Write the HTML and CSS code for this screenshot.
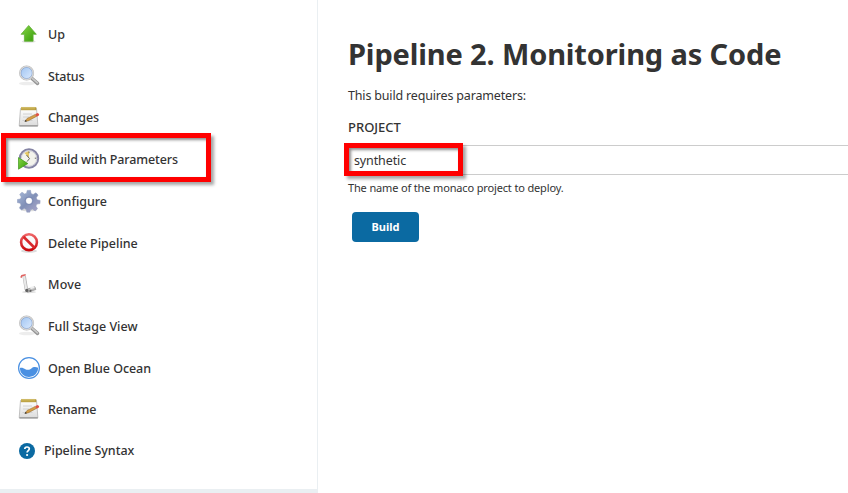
FILE: index.html
```html
<!DOCTYPE html>
<html lang="en">
<head>
<meta charset="utf-8">
<title>Pipeline 2. Monitoring as Code</title>
<link rel="stylesheet" href="styles.css">
</head>
<body>
<svg class="defs" aria-hidden="true">
  <defs>
    <linearGradient id="green" x1="0" y1="0" x2="1" y2="1"><stop offset="0" stop-color="#87d646"/><stop offset="1" stop-color="#349b08"/></linearGradient>
    <linearGradient id="glass" x1="0" y1="0" x2="1" y2="1"><stop offset="0" stop-color="#9cc2f0"/><stop offset="1" stop-color="#e0edff"/></linearGradient>
    <linearGradient id="paper" x1="0" y1="0" x2="0" y2="1"><stop offset="0" stop-color="#fff"/><stop offset="1" stop-color="#dcdcdc"/></linearGradient>
    <linearGradient id="steel" x1="0" y1="0" x2="1" y2="1"><stop offset="0" stop-color="#a9bbdb"/><stop offset=".5" stop-color="#8190b7"/><stop offset="1" stop-color="#b0a9cb"/></linearGradient>
    <linearGradient id="red" x1="0" y1="0" x2="0" y2="1"><stop offset="0" stop-color="#ef6466"/><stop offset="1" stop-color="#c9090d"/></linearGradient>
    <symbol id="search" viewBox="0 0 24 24">
      <ellipse cx="10" cy="19.5" rx="8" ry="1.8" fill="#ededed"/>
      <path d="M15 14.5 20.5 19.3" stroke="#959595" stroke-width="3.6" stroke-linecap="round"/>
      <path d="M15.3 14.3 20.5 18.8" stroke="#c8c8c8" stroke-width="1.6" stroke-linecap="round"/>
      <circle cx="9.6" cy="9" r="6.6" fill="url(#glass)" stroke="#b9b9b9" stroke-width="1.9"/>
      <circle cx="9.6" cy="9" r="5.6" fill="none" stroke="#7f9fd0" stroke-width=".6"/>
      <circle cx="9.6" cy="9" r="6.5" fill="none" stroke="#e2e2e2" stroke-width=".9"/>
    </symbol>
    <symbol id="notepad" viewBox="0 0 24 24">
      <path d="M3.5 3.5h16l1.4 17.2H2.2z" fill="url(#paper)" stroke="#b4b4b4" stroke-width=".8"/>
      <path d="M2.4 20.9h18.4" stroke="#999" stroke-width="1.4"/>
      <path d="M4 2.2h15.3v3H4z" fill="#b69a3c"/>
      <path d="M5 1.9v2.6m2-2.6v2.6m2-2.6v2.6m2-2.6v2.6m2-2.6v2.6m2-2.6v2.6m2-2.6v2.6" stroke="#e0cb70" stroke-width=".8"/>
      <path d="M6 9h9M6 12h6M5.5 15.5h10" stroke="#d2d2d2"/>
      <path d="m8 16.3 2-2.8 8.2-4.1 1.3 2-8.4 4.5z" fill="#d69e46" stroke="#8c672f" stroke-width=".5"/>
      <path d="m7.5 16.8 1.3-2 1.1 1.6z" fill="#333"/>
      <path d="m18.2 9.3 2.2-1.2 1.8.8-.3 1.7-2.3 1.2z" fill="#df5144"/>
    </symbol>
  </defs>
</svg>
<div class="page">
  <aside class="sidebar">
    <nav class="tasks">
      <a class="task up"><svg class="icon" viewBox="0 0 24 24"><ellipse cx="11.7" cy="19.5" rx="7" ry="1.3" fill="#e3e3e3"/><path d="m11.7 3.5 7.6 8.8h-3.2v7H7.4v-7H4.1z" fill="url(#green)" stroke="#63ae38" stroke-width=".8"/></svg><span>Up</span></a>
      <a class="task status"><svg class="icon"><use href="#search"/></svg><span>Status</span></a>
      <a class="task changes"><svg class="icon"><use href="#notepad"/></svg><span>Changes</span></a>
      <a class="task build-task"><svg class="icon" viewBox="0 0 24 24"><circle cx="12" cy="11.5" r="9.2" fill="#f3f3ec" stroke="#8584a4" stroke-width="2"/><circle cx="12" cy="11.5" r="7.7" fill="none" stroke="#c8c7d4" stroke-width=".8"/><path d="M12 10.5 7.4 6 12 4z" fill="#e5c865"/><path d="m9.5 8 3 3.6-2.5 3m2-10v1.6m5.8 5h1.5" fill="none" stroke="#66665e"/><path d="m1.5 10.6 9.3 6-9.3 5.6z" fill="url(#green)" stroke="#3f961d" stroke-width=".7"/></svg><span>Build with Parameters</span></a>
      <a class="task configure"><svg class="icon" viewBox="0 0 24 24"><ellipse cx="12" cy="21" rx="8" ry="1.3" fill="#ddd"/><g fill="url(#steel)" stroke="#8f9abc" stroke-width=".5"><path fill-rule="evenodd" d="m10.2 1.4 3.3-.1.6 3.2 2 .9L19 3.8l2.1 2.3-1.8 2.7.8 2 3 .6-.1 3.2-3.1.5-1 2 1.6 2.7-2.3 2.1-2.7-1.8-2 .7-.7 2.4h-3l-.5-2.7-2.1-.9-2.7 1.5-2.1-2.2 1.6-2.7-.8-2-2.9-.6.1-3.1 3-.5.9-2L2.7 5.4 5 3.2 7.6 5l2-.8zM12 8.4a3.4 3.4 0 1 0 0 6.8 3.4 3.4 0 0 0 0-6.8z"/></g><circle cx="12" cy="11.8" r="3.9" fill="none" stroke="#7785b1" stroke-width=".8"/></svg><span>Configure</span></a>
      <a class="task delete"><svg class="icon" viewBox="0 0 24 24"><ellipse cx="12" cy="20" rx="8" ry="1.7" fill="#ddd"/><circle cx="12" cy="11.2" r="7.9" fill="#fafafa" stroke="url(#red)" stroke-width="2.6"/><path d="m6.5 5.8 11 11" stroke="#d92a2d" stroke-width="2.7"/></svg><span>Delete Pipeline</span></a>
      <a class="task move"><svg class="icon" viewBox="0 0 24 24"><ellipse cx="12" cy="20" rx="7" ry="1.2" fill="#ddd"/><path d="m9.2 17.4 8.6-2.6 1 2.8-8.4 2.6z" fill="#bcbcbc" stroke="#888" stroke-width=".7"/><path d="m13 15 4-.8.8 1.8-4.3 1.2z" fill="#eee"/><path d="m7.2 4.2 2.2 13.5" stroke="#b2b2b2" stroke-width="3.4"/><path d="m7 4.2 2.2 13" stroke="#e9e9e9" stroke-width="2.2"/><path d="m3.9 5.6 1-2 3.8-.8" fill="none" stroke="#df6260" stroke-width="1.6"/><circle cx="9.8" cy="18.4" r="1.6" fill="#5f5f5f"/><circle cx="13.5" cy="18.8" r="1.1" fill="#5f5f5f"/></svg><span>Move</span></a>
      <a class="task stage"><svg class="icon"><use href="#search"/></svg><span>Full Stage View</span></a>
      <a class="task ocean"><svg class="icon" viewBox="0 0 24 24"><circle cx="12" cy="12" r="10.4" fill="#fff" stroke="#4a90e2" stroke-width="1.2"/><path d="M2.8 12c2.3-.7 3.5.1 5.1 1 3 1.5 4.9.8 6.5-.6 1.8-1.6 4-1.7 6.8-.7a9.2 9.2 0 0 1-18.4.3z" fill="#4a90e2"/></svg><span>Open Blue Ocean</span></a>
      <a class="task rename"><svg class="icon"><use href="#notepad"/></svg><span>Rename</span></a>
      <a class="task syntax"><svg class="icon help" viewBox="0 0 16 16"><circle cx="8" cy="8" r="8" fill="#0b6aa2"/><path d="M5.8 6.1C5.8 4.7 6.7 4 8 4s2.3.7 2.3 1.8C10.3 7.6 8.1 7.5 8.1 9.6" fill="none" stroke="#fff" stroke-width="1.7"/><circle cx="8.1" cy="12" r="1.1" fill="#fff"/></svg><span>Pipeline Syntax</span></a>
    </nav>
    <div class="task-highlight"></div>
  </aside>
  <main class="content">
    <h1><span>Pipeline 2. Monitoring as Code</span></h1>
    <p class="intro"><span>This build requires parameters:</span></p>
    <form>
      <label for="project"><span>PROJECT</span></label>
      <div class="field">
        <input id="project" type="text" value="synthetic">
        <div class="field-highlight"></div>
      </div>
      <p class="description"><span>The name of the monaco project to deploy.</span></p>
      <button type="button"><span>Build</span></button>
    </form>
  </main>
</div>
</body>
</html>
```
FILE: styles.css
```css
* { box-sizing: border-box; }
body {
  margin: 0;
  overflow: hidden;
  background: #fff;
  color: #333;
  font: 12.5px/20px "Noto Sans", "Open Sans", sans-serif;
}
.defs { position: absolute; width: 0; height: 0; }
.page { display: grid; grid-template-columns: 318px 1fr; height: 493px; }
.sidebar {
  position: relative;
  border-right: 1px solid #eaeff2;
  border-bottom: 4px solid #eaeff2;
}
.tasks { display: flex; flex-direction: column; padding: 13px 0 0 17px; }
.task {
  display: flex;
  align-items: center;
  gap: 7px;
  height: 41.75px;
  font-weight: 500;
  white-space: nowrap;
}
.task span { padding-top: 2px; }
.task.move { letter-spacing: .15px; }
.task.status { letter-spacing: -.2px; }
.task.changes, .task.build-task { letter-spacing: -.12px; }
.task.ocean, .task.syntax { letter-spacing: -.05px; }
.task.rename { height: 40.75px; letter-spacing: -.15px; }
.icon { flex: none; width: 24px; height: 24px; }
.icon.help { width: 16px; height: 16px; margin: 1px 1px 0 2px; }
.task.syntax { gap: 8px; }
.task-highlight, .field-highlight {
  position: absolute;
  border: 5px solid #f00;
  box-shadow: 3px 3px 3px rgb(0 0 0 / 35%), inset 2px 2px 3px rgb(0 0 0 / 45%);
  pointer-events: none;
}
.task-highlight { left: 1px; top: 133px; width: 210px; height: 49px; }
.content { min-width: 0; padding: 34px 0 0 30px; }
h1 { margin: 0; font-size: 29px; line-height: 40px; font-weight: 700; letter-spacing: -.14px; white-space: nowrap; }
.intro { margin: 12px 0 0; letter-spacing: -.17px; }
label { display: block; margin-top: 11px; font-size: 13px; font-weight: 500; }
.field { position: relative; margin-top: 8px; }
input {
  display: block;
  width: 100%;
  height: 30px;
  padding: 0 5px;
  border: 1px solid #ccc;
  border-right: 0;
  background: #fff;
  color: #333;
  font: inherit;
  letter-spacing: -.12px;
}
.field-highlight { left: -4px; top: -2px; width: 119px; height: 33px; }
.description { margin: 3px 0 0; font-size: 11px; letter-spacing: -.15px; }
button {
  display: block;
  width: 67px;
  height: 30px;
  margin: 14px 0 0 4px;
  padding: 0;
  border: 0;
  border-radius: 4px;
  background: #0b6aa2;
  color: #fff;
  font: 700 11px/30px "Noto Sans", sans-serif;
}
```
